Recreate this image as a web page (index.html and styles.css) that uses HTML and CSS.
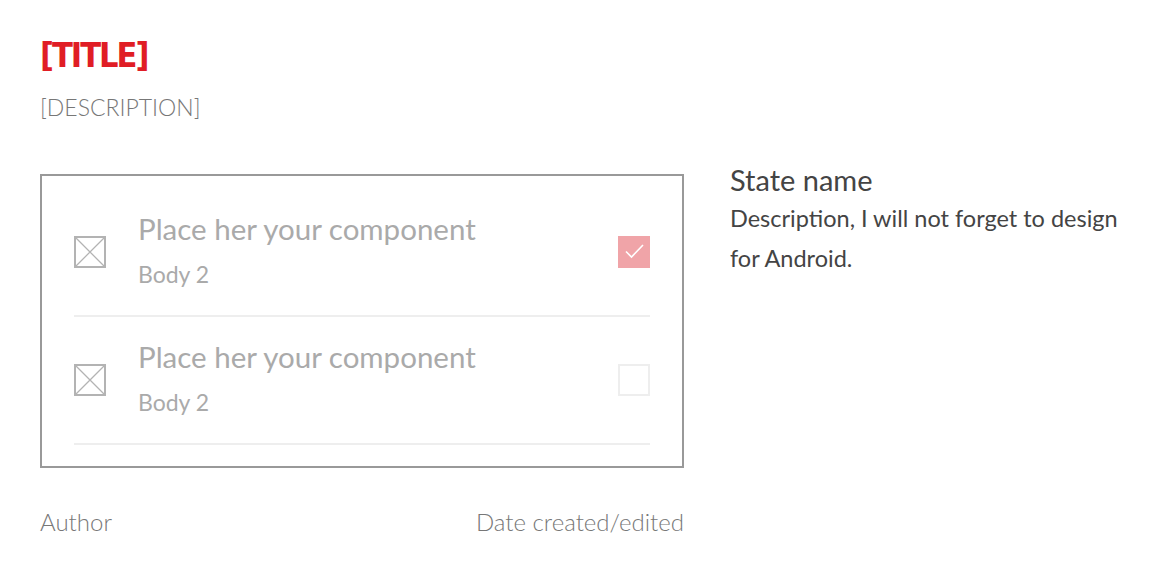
FILE: index.html
```html
<!DOCTYPE html>
<html lang="en">
<head>
<meta charset="utf-8">
<title>Component state</title>
<link rel="stylesheet" href="styles.css">
</head>
<body>
<div class="page">
  <header class="header">
    <h1 class="title">[TITLE]</h1>
    <p class="subtitle">[DESCRIPTION]</p>
  </header>
  <main class="main">
    <section class="left">
      <div class="card">
        <div class="row">
          <svg class="ph-icon" width="32" height="32" viewBox="0 0 32 32"><rect x="1" y="1" width="30" height="30" fill="none" stroke="#b3b3b3" stroke-width="2"/><path d="M2 2L30 30M30 2L2 30" stroke="#b3b3b3" stroke-width="1.3" fill="none"/></svg>
          <div class="row-text">
            <div class="row-title">Place her your component</div>
            <div class="row-body">Body 2</div>
          </div>
          <span class="check check-on"><svg width="32" height="32" viewBox="0 0 32 32"><path d="M8 15.5L13.5 21L25 9" fill="none" stroke="#fff" stroke-width="1.6"/></svg></span>
        </div>
        <div class="row">
          <svg class="ph-icon" width="32" height="32" viewBox="0 0 32 32"><rect x="1" y="1" width="30" height="30" fill="none" stroke="#b3b3b3" stroke-width="2"/><path d="M2 2L30 30M30 2L2 30" stroke="#b3b3b3" stroke-width="1.3" fill="none"/></svg>
          <div class="row-text">
            <div class="row-title">Place her your component</div>
            <div class="row-body">Body 2</div>
          </div>
          <span class="check check-off"></span>
        </div>
      </div>
      <footer class="footer">
        <span>Author</span>
        <span>Date created/edited</span>
      </footer>
    </section>
    <aside class="right">
      <h2 class="state-name">State name</h2>
      <p class="state-desc">Description, I will not forget to design for Android.</p>
    </aside>
  </main>
</div>
</body>
</html>
```

FILE: styles.css
```css
* { box-sizing: border-box; }
html, body { margin: 0; padding: 0; background: #fff; }
body { font-family: Lato, "Noto Sans", sans-serif; }
.page { padding: 31px 40px 0 40px; }
.header { display: flex; flex-direction: column; }
.title {
  margin: 0;
  font-family: "Liberation Sans Narrow", "DejaVu Sans Condensed", "Liberation Sans", sans-serif;
  font-weight: 700;
  font-size: 34px;
  line-height: 48px;
  color: #e01d25;
  letter-spacing: -2px;
}
.subtitle {
  margin: 12px 0 0 0;
  font-size: 23px;
  line-height: 32px;
  font-weight: 300;
  color: #777;
}
.main { display: flex; gap: 46px; margin-top: 51px; }
.left { flex: none; width: 644px; display: flex; flex-direction: column; }
.card {
  border: 2px solid #999;
  padding: 13px 32px 21px 32px;
  display: flex;
  flex-direction: column;
}
.row {
  height: 128px;
  border-bottom: 2px solid #eee;
  display: flex;
  align-items: center;
  gap: 32px;
}
.ph-icon { flex: none; display: block; }
.row-text { flex: 1; display: flex; flex-direction: column; margin-top: -6px; }
.row-title { font-size: 29.5px; line-height: 40px; color: #aaa; font-weight: 400; }
.row-body { font-size: 23px; line-height: 32px; color: #aaa; margin-top: 9px; }
.check { flex: none; width: 32px; height: 32px; display: block; }
.check svg { display: block; }
.check-on { background: #f0a4a8; }
.check-off { border: 2px solid #eee; }
.footer {
  display: flex;
  justify-content: space-between;
  margin-top: 38px;
  font-size: 24px;
  line-height: 32px;
  color: #777;
  font-weight: 300;
}
.right { flex: 1; min-width: 0; margin-top: -12px; }
.state-name { margin: 0; font-size: 29px; line-height: 36px; font-weight: 400; color: #444; }
.state-desc { margin: 0; font-size: 23.5px; line-height: 40px; color: #444; }
```
